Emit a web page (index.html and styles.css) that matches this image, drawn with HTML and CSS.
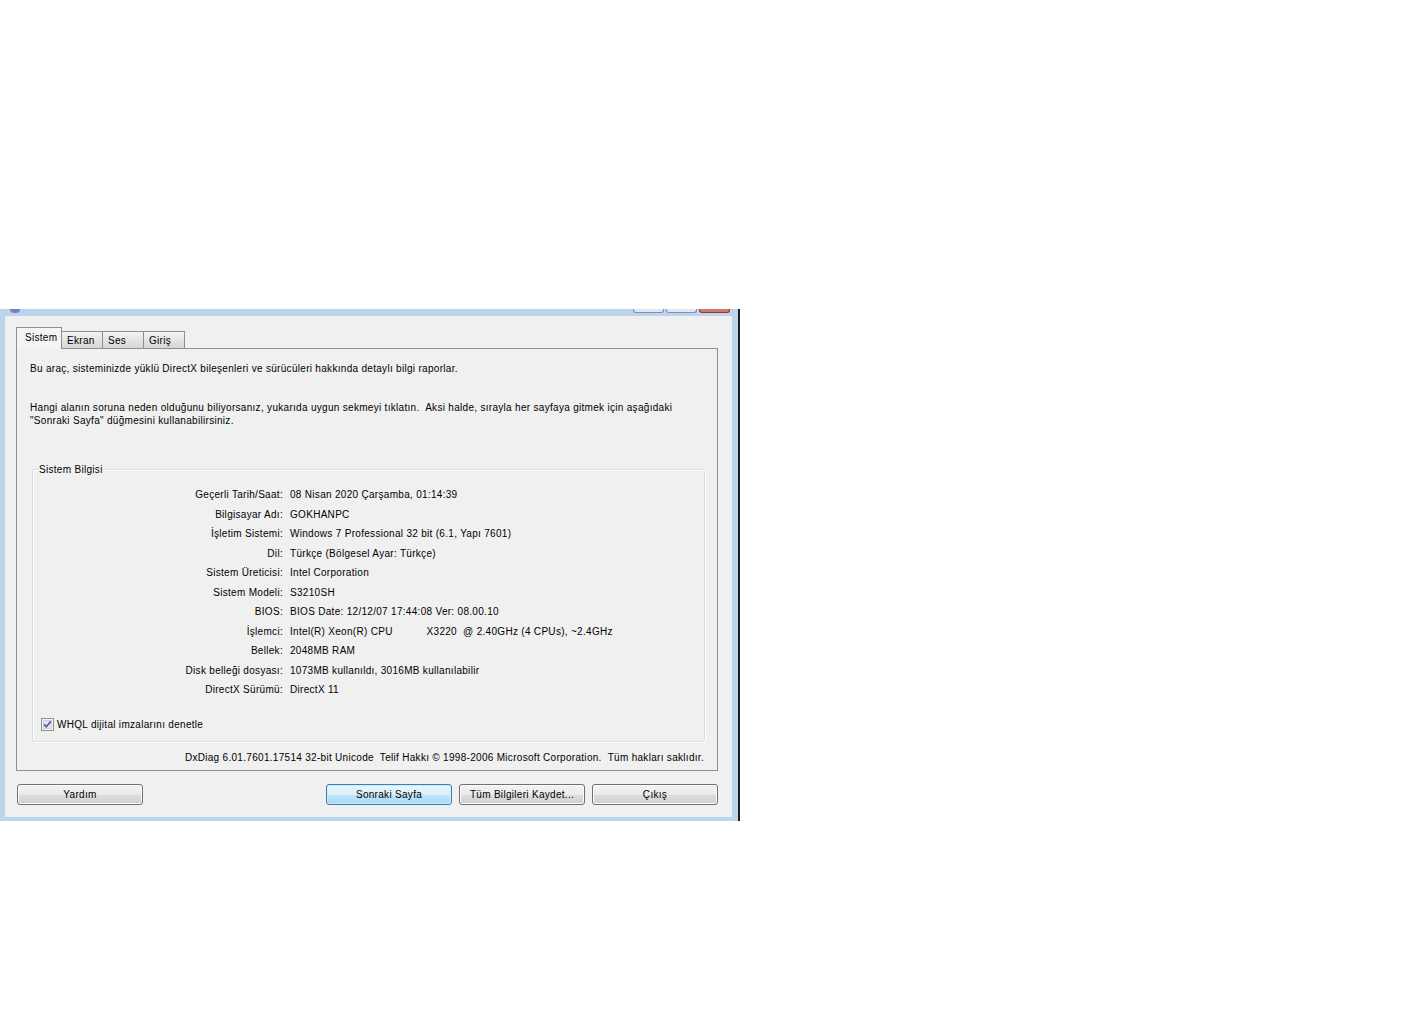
FILE: index.html
```html
<!DOCTYPE html>
<html lang="tr">

<head>
    <meta charset="UTF-8" />
    <title>DirectX Tanı Aracı</title>
    <link rel="stylesheet" href="styles.css">
</head>

<body>

    <div class="window">
        <!-- pencere başlığı (çoğu kesilmiş) -->
        <div class="caption">
            <span class="app-icon"></span>
            <div class="caption-buttons">
                <span class="cap-btn"></span>
                <span class="cap-btn"></span>
                <span class="cap-btn close"></span>
            </div>
        </div>

        <div class="client">
            <div class="tabs">
                <div class="tab active">Sistem</div>
                <div class="tab">Ekran</div>
                <div class="tab">Ses</div>
                <div class="tab">Giriş</div>
            </div>

            <div class="panel">
                <p class="intro">Bu araç, sisteminizde yüklü DirectX bileşenleri ve sürücüleri hakkında detaylı bilgi raporlar.</p>
                <p class="intro second">Hangi alanın soruna neden olduğunu biliyorsanız, yukarıda uygun sekmeyi tıklatın.&nbsp; Aksi halde, sırayla her sayfaya gitmek için aşağıdaki<br>"Sonraki Sayfa" düğmesini kullanabilirsiniz.</p>

                <fieldset class="group">
                    <legend>Sistem Bilgisi</legend>
                    <div class="info">
                        <span class="label">Geçerli Tarih/Saat:</span><span class="value">08 Nisan 2020 Çarşamba, 01:14:39</span>
                        <span class="label">Bilgisayar Adı:</span><span class="value">GOKHANPC</span>
                        <span class="label">İşletim Sistemi:</span><span class="value">Windows 7 Professional 32 bit (6.1, Yapı 7601)</span>
                        <span class="label">Dil:</span><span class="value">Türkçe (Bölgesel Ayar: Türkçe)</span>
                        <span class="label">Sistem Üreticisi:</span><span class="value">Intel Corporation</span>
                        <span class="label">Sistem Modeli:</span><span class="value">S3210SH</span>
                        <span class="label">BIOS:</span><span class="value">BIOS Date: 12/12/07 17:44:08 Ver: 08.00.10</span>
                        <span class="label">İşlemci:</span><span class="value">Intel(R) Xeon(R) CPU&nbsp;&nbsp;&nbsp;&nbsp;&nbsp;&nbsp;&nbsp;&nbsp;&nbsp;&nbsp; X3220&nbsp; @ 2.40GHz (4 CPUs), ~2.4GHz</span>
                        <span class="label">Bellek:</span><span class="value">2048MB RAM</span>
                        <span class="label">Disk belleği dosyası:</span><span class="value">1073MB kullanıldı, 3016MB kullanılabilir</span>
                        <span class="label">DirectX Sürümü:</span><span class="value">DirectX 11</span>
                    </div>
                    <label class="check">
                        <svg width="13" height="13" viewBox="0 0 13 13">
                            <rect x="0.5" y="0.5" width="12" height="12" fill="#f6f6f6" stroke="#8e8f8f" />
                            <rect x="2.5" y="2.5" width="8" height="8" fill="#e4e6ec" stroke="#cdd1da" />
                            <path d="M3.2 6.4 L5.3 8.8 L9.8 3.4" fill="none" stroke="#4a5f9c" stroke-width="1.7" />
                        </svg>
                        WHQL dijital imzalarını denetle
                    </label>
                </fieldset>

                <div class="copyright">DxDiag 6.01.7601.17514 32-bit Unicode&nbsp; Telif Hakkı © 1998-2006 Microsoft Corporation.&nbsp; Tüm hakları saklıdır.</div>
            </div>

            <div class="buttons">
                <button>Yardım</button>
                <div class="right-buttons">
                    <button class="default">Sonraki Sayfa</button>
                    <button>Tüm Bilgileri Kaydet...</button>
                    <button>Çıkış</button>
                </div>
            </div>
        </div>
    </div>

</body>

</html>
```

FILE: styles.css
```css
body {
    margin: 0;
    background: #fff;
    font-family: 'Liberation Sans', Arial, sans-serif;
    font-size: 10px;
    letter-spacing: 0.3px;
    color: #000;
}

.window {
    width: 740px;
    height: 512px;
    margin-top: 309px;
    box-sizing: border-box;
    background: #bcd4ec;
    border-right: 2px solid #1c1c1c;
    padding: 0 6px 4px 5px;
    display: flex;
    flex-direction: column;
}

.caption {
    height: 7px;
    display: flex;
    justify-content: space-between;
    align-items: flex-start;
    padding-right: 2px;
}

.app-icon {
    width: 10px;
    height: 4px;
    margin-left: 5px;
    border-radius: 0 0 5px 5px;
    background: #7a80c8;
}

.caption-buttons {
    display: flex;
    gap: 2px;
}

.cap-btn {
    width: 29px;
    height: 3px;
    border: 1px solid #7f90a8;
    border-top: none;
    border-radius: 0 0 3px 3px;
    background: #dde8f4;
}

.cap-btn.close {
    background: #d47570;
    border-color: #8c3b36;
}

.client {
    flex: 1;
    background: #f0f0f0;
    padding: 11px 14px 0 11px;
}

.tabs {
    height: 21px;
    display: flex;
    align-items: flex-end;
    position: relative;
    z-index: 1;
}

.tab {
    width: 41px;
    height: 17px;
    box-sizing: border-box;
    border: 1px solid #8e8f8f;
    border-bottom: none;
    border-left: none;
    padding: 2px 0 0 5px;
    background: linear-gradient(#f4f4f4, #e4e4e4 50%, #d6d6d6);
    line-height: 13px;
}

.tab.active {
    width: 46px;
    height: 22px;
    border-left: 1px solid #8e8f8f;
    margin-bottom: -1px;
    padding: 3px 0 0 8px;
    background: #f4f4f4;
}

.panel {
    height: 423px;
    box-sizing: border-box;
    border: 1px solid #8e8f8f;
    padding: 13px 13px 0 13px;
}

.intro {
    margin: 0;
    line-height: 13px;
}

.intro.second {
    margin-top: 26px;
}

.group {
    margin: 36px -1px 0 2px;
    padding: 9px 0 10px 0;
    border: 1px solid #d5dfe5;
    border-radius: 3px;
    box-shadow: 1px 1px 0 #fff, inset 1px 1px 0 #fff;
    min-width: 0;
}

.group legend {
    margin-left: 5px;
    padding: 0 1px;
    line-height: 13px;
}

.info {
    display: grid;
    grid-template-columns: 250px auto;
    column-gap: 7px;
    grid-auto-rows: 19.5px;
    align-items: center;
}

.info .label {
    text-align: right;
}

.check {
    display: flex;
    align-items: center;
    gap: 3px;
    margin: 18px 0 0 8px;
    line-height: 13px;
}

.copyright {
    margin-top: 9px;
    text-align: right;
    line-height: 13px;
}

.buttons {
    display: flex;
    justify-content: space-between;
    margin-top: 13px;
    padding-left: 1px;
}

.right-buttons {
    display: flex;
    gap: 7px;
}

.buttons button {
    width: 126px;
    height: 21px;
    padding: 0;
    font-family: inherit;
    font-size: 10px;
    letter-spacing: 0.3px;
    color: #000;
    border: 1px solid #707070;
    border-radius: 3px;
    background: linear-gradient(#f2f2f2, #ebebeb 50%, #dddddd 51%, #cfcfcf);
    box-shadow: inset 0 0 0 1px #fbfbfb;
}

.buttons button.default {
    border-color: #3c7fb1;
    background: linear-gradient(#eaf6fd, #d9f0fc 50%, #bee6fd 51%, #a7d9f5);
    box-shadow: inset 0 0 0 1px #cdeafc;
}
```
